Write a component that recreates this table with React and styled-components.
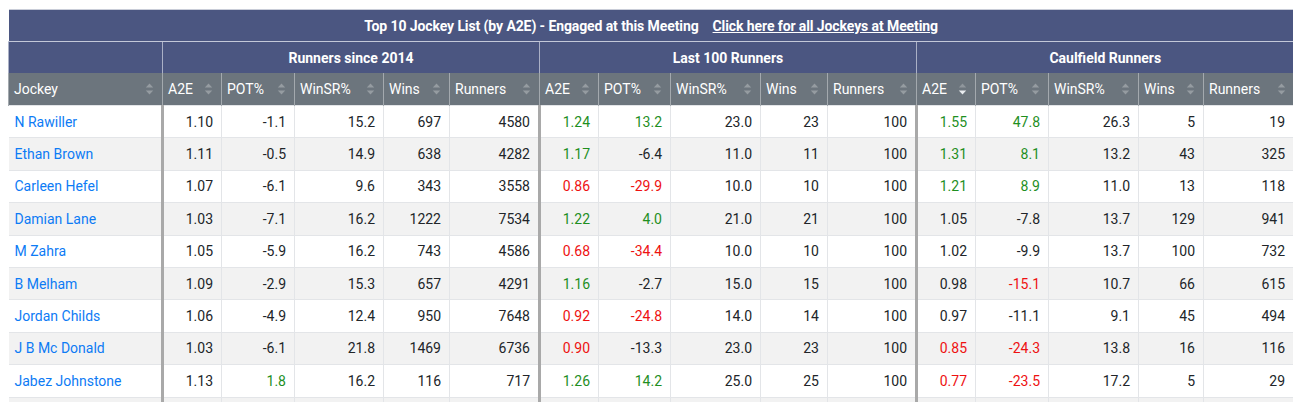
import React from "react";
import styled, { createGlobalStyle } from "styled-components";

// Constants:
const NAVY = "#4b5681";
const HEAD_GRAY = "#6c757d";
const LINK = "#0d7bf5";
const GREEN = "#1f8f1f";
const RED = "#ee1111";

const GROUPS = ["Runners since 2014", "Last 100 Runners", "Caulfield Runners"];
const SUB_COLS = ["A2E", "POT%", "WinSR%", "Wins", "Runners"];
const WIDTHS = [
  154,
  59, 73, 89, 66, 90,
  59, 72, 90, 67, 89,
  59, 73, 90, 65, 90
];

const JOCKEYS = [
  ["N Rawiller", [1.10, -1.1, 15.2, 697, 4580], [1.24, 13.2, 23.0, 23, 100], [1.55, 47.8, 26.3, 5, 19]],
  ["Ethan Brown", [1.11, -0.5, 14.9, 638, 4282], [1.17, -6.4, 11.0, 11, 100], [1.31, 8.1, 13.2, 43, 325]],
  ["Carleen Hefel", [1.07, -6.1, 9.6, 343, 3558], [0.86, -29.9, 10.0, 10, 100], [1.21, 8.9, 11.0, 13, 118]],
  ["Damian Lane", [1.03, -7.1, 16.2, 1222, 7534], [1.22, 4.0, 21.0, 21, 100], [1.05, -7.8, 13.7, 129, 941]],
  ["M Zahra", [1.05, -5.9, 16.2, 743, 4586], [0.68, -34.4, 10.0, 10, 100], [1.02, -9.9, 13.7, 100, 732]],
  ["B Melham", [1.09, -2.9, 15.3, 657, 4291], [1.16, -2.7, 15.0, 15, 100], [0.98, -15.1, 10.7, 66, 615]],
  ["Jordan Childs", [1.06, -4.9, 12.4, 950, 7648], [0.92, -24.8, 14.0, 14, 100], [0.97, -11.1, 9.1, 45, 494]],
  ["J B Mc Donald", [1.03, -6.1, 21.8, 1469, 6736], [0.90, -13.3, 23.0, 23, 100], [0.85, -24.3, 13.8, 16, 116]],
  ["Jabez Johnstone", [1.13, 1.8, 16.2, 116, 717], [1.26, 14.2, 25.0, 25, 100], [0.77, -23.5, 17.2, 5, 29]],
  ["Blake Shinn", [1.02, -8.4, 13.1, 812, 6198], [1.04, -3.5, 12.0, 12, 100], [0.74, -31.2, 8.4, 11, 131]]
];

// Functions:
const a2eTone = (v) => (v >= 1.15 ? "good" : v < 0.95 ? "bad" : "plain");
const potTone = (v) => (v > 0 ? "good" : v < -15 ? "bad" : "plain");

const formatStats = ([a2e, pot, winsr, wins, runners]) => [
  { text: a2e.toFixed(2), tone: a2eTone(a2e) },
  { text: pot.toFixed(1), tone: potTone(pot) },
  { text: winsr.toFixed(1), tone: "plain" },
  { text: String(wins), tone: "plain" },
  { text: String(runners), tone: "plain" }
];

const SortIcon = ({ active }) => (
  <SortSvg width="9" height="14" viewBox="0 0 9 14">
    <path d="M4.5 1.5 L8.2 5.6 L0.8 5.6 Z" fill={active ? "#8f969c" : "#959ca1"} />
    <path d="M4.5 12.5 L8.2 8.4 L0.8 8.4 Z" fill={active ? "#e9ecef" : "#959ca1"} />
  </SortSvg>
);

const App = () => {
  return (
    <>
      <GlobalStyle />
      <Table>
        <colgroup>
          {WIDTHS.map((w, i) => (
            <col key={i} style={{ width: w }} />
          ))}
        </colgroup>
        <thead>
          <tr>
            <TitleCell colSpan={16}>
              Top 10 Jockey List (by A2E) - Engaged at this Meeting
              <TitleLink href="#">Click here for all Jockeys at Meeting</TitleLink>
            </TitleCell>
          </tr>
          <tr>
            <GroupCell />
            {GROUPS.map((g) => (
              <GroupCell key={g} colSpan={5}>
                {g}
              </GroupCell>
            ))}
          </tr>
          <tr>
            <HeadCell>
              <HeadInner>
                Jockey
                <SortIcon />
              </HeadInner>
            </HeadCell>
            {GROUPS.map((g, gi) =>
              SUB_COLS.map((c) => (
                <HeadCell key={g + c}>
                  <HeadInner>
                    {c}
                    <SortIcon active={gi === 2 && c === "A2E"} />
                  </HeadInner>
                </HeadCell>
              ))
            )}
          </tr>
        </thead>
        <tbody>
          {JOCKEYS.map(([name, ...groups], ri) => (
            <Row key={name} $striped={ri % 2 === 1}>
              <NameCell>
                <NameLink href="#">{name}</NameLink>
              </NameCell>
              {groups.map((stats, gi) =>
                formatStats(stats).map((cell, ci) => (
                  <NumCell key={gi + "-" + ci} $tone={cell.tone} $groupStart={ci === 0}>
                    {cell.text}
                  </NumCell>
                ))
              )}
            </Row>
          ))}
        </tbody>
      </Table>
    </>
  );
};

// Exports:
export default App;

// Styles:
const GlobalStyle = createGlobalStyle`
  body {
    margin: 9px 7px 8px 8px;
    background: #ffffff;
    font-family: Roboto, "Liberation Sans", Arial, sans-serif;
    font-size: 14px;
    color: #212529;
    overflow: hidden;
  }
`;

const Table = styled.table`
  width: 1285px;
  table-layout: fixed;
  border-collapse: collapse;
  border-top: 1px solid #c9cdd8;
`;

const TitleCell = styled.th`
  height: 31px;
  padding: 0;
  background-color: ${NAVY};
  color: #ffffff;
  font-weight: 700;
  font-size: 14px;
  letter-spacing: -0.1px;
  text-align: center;
  border-bottom: 1px solid #c3c8d9;
`;

const TitleLink = styled.a`
  margin-left: 14px;
  color: #ffffff;
  text-decoration: underline;
`;

const GroupCell = styled.th`
  height: 31px;
  padding: 0;
  background-color: ${NAVY};
  color: #ffffff;
  font-weight: 700;
  font-size: 14px;
  text-align: center;
  border-left: 1px solid #aab0c6;
`;

const HeadCell = styled.th`
  height: 32px;
  padding: 0 8px 0 5px;
  background-color: ${HEAD_GRAY};
  color: #ffffff;
  font-weight: 400;
  font-size: 14px;
  text-align: left;
  border-left: 1px solid #a3a9ae;
`;

const HeadInner = styled.div`
  display: flex;
  align-items: center;
  justify-content: space-between;
  white-space: nowrap;
`;

const SortSvg = styled.svg`
  flex: none;
  margin-left: 4px;
`;

const Row = styled.tr`
  height: 32.4px;
  background-color: ${(p) => (p.$striped ? "#f2f2f2" : "#ffffff")};
`;

const NameCell = styled.td`
  padding: 0 6px;
  border: 1px solid #e3e5e8;
  border-left: none;
  white-space: nowrap;
`;

const NameLink = styled.a`
  color: ${LINK};
  text-decoration: none;
`;

const NumCell = styled.td`
  padding: 0 8px 0 4px;
  text-align: right;
  border: 1px solid #e3e5e8;
  border-left: ${(p) => (p.$groupStart ? "3px solid #a9a9a9" : "1px solid #e3e5e8")};
  color: ${(p) => (p.$tone === "good" ? GREEN : p.$tone === "bad" ? RED : "#212529")};
`;
